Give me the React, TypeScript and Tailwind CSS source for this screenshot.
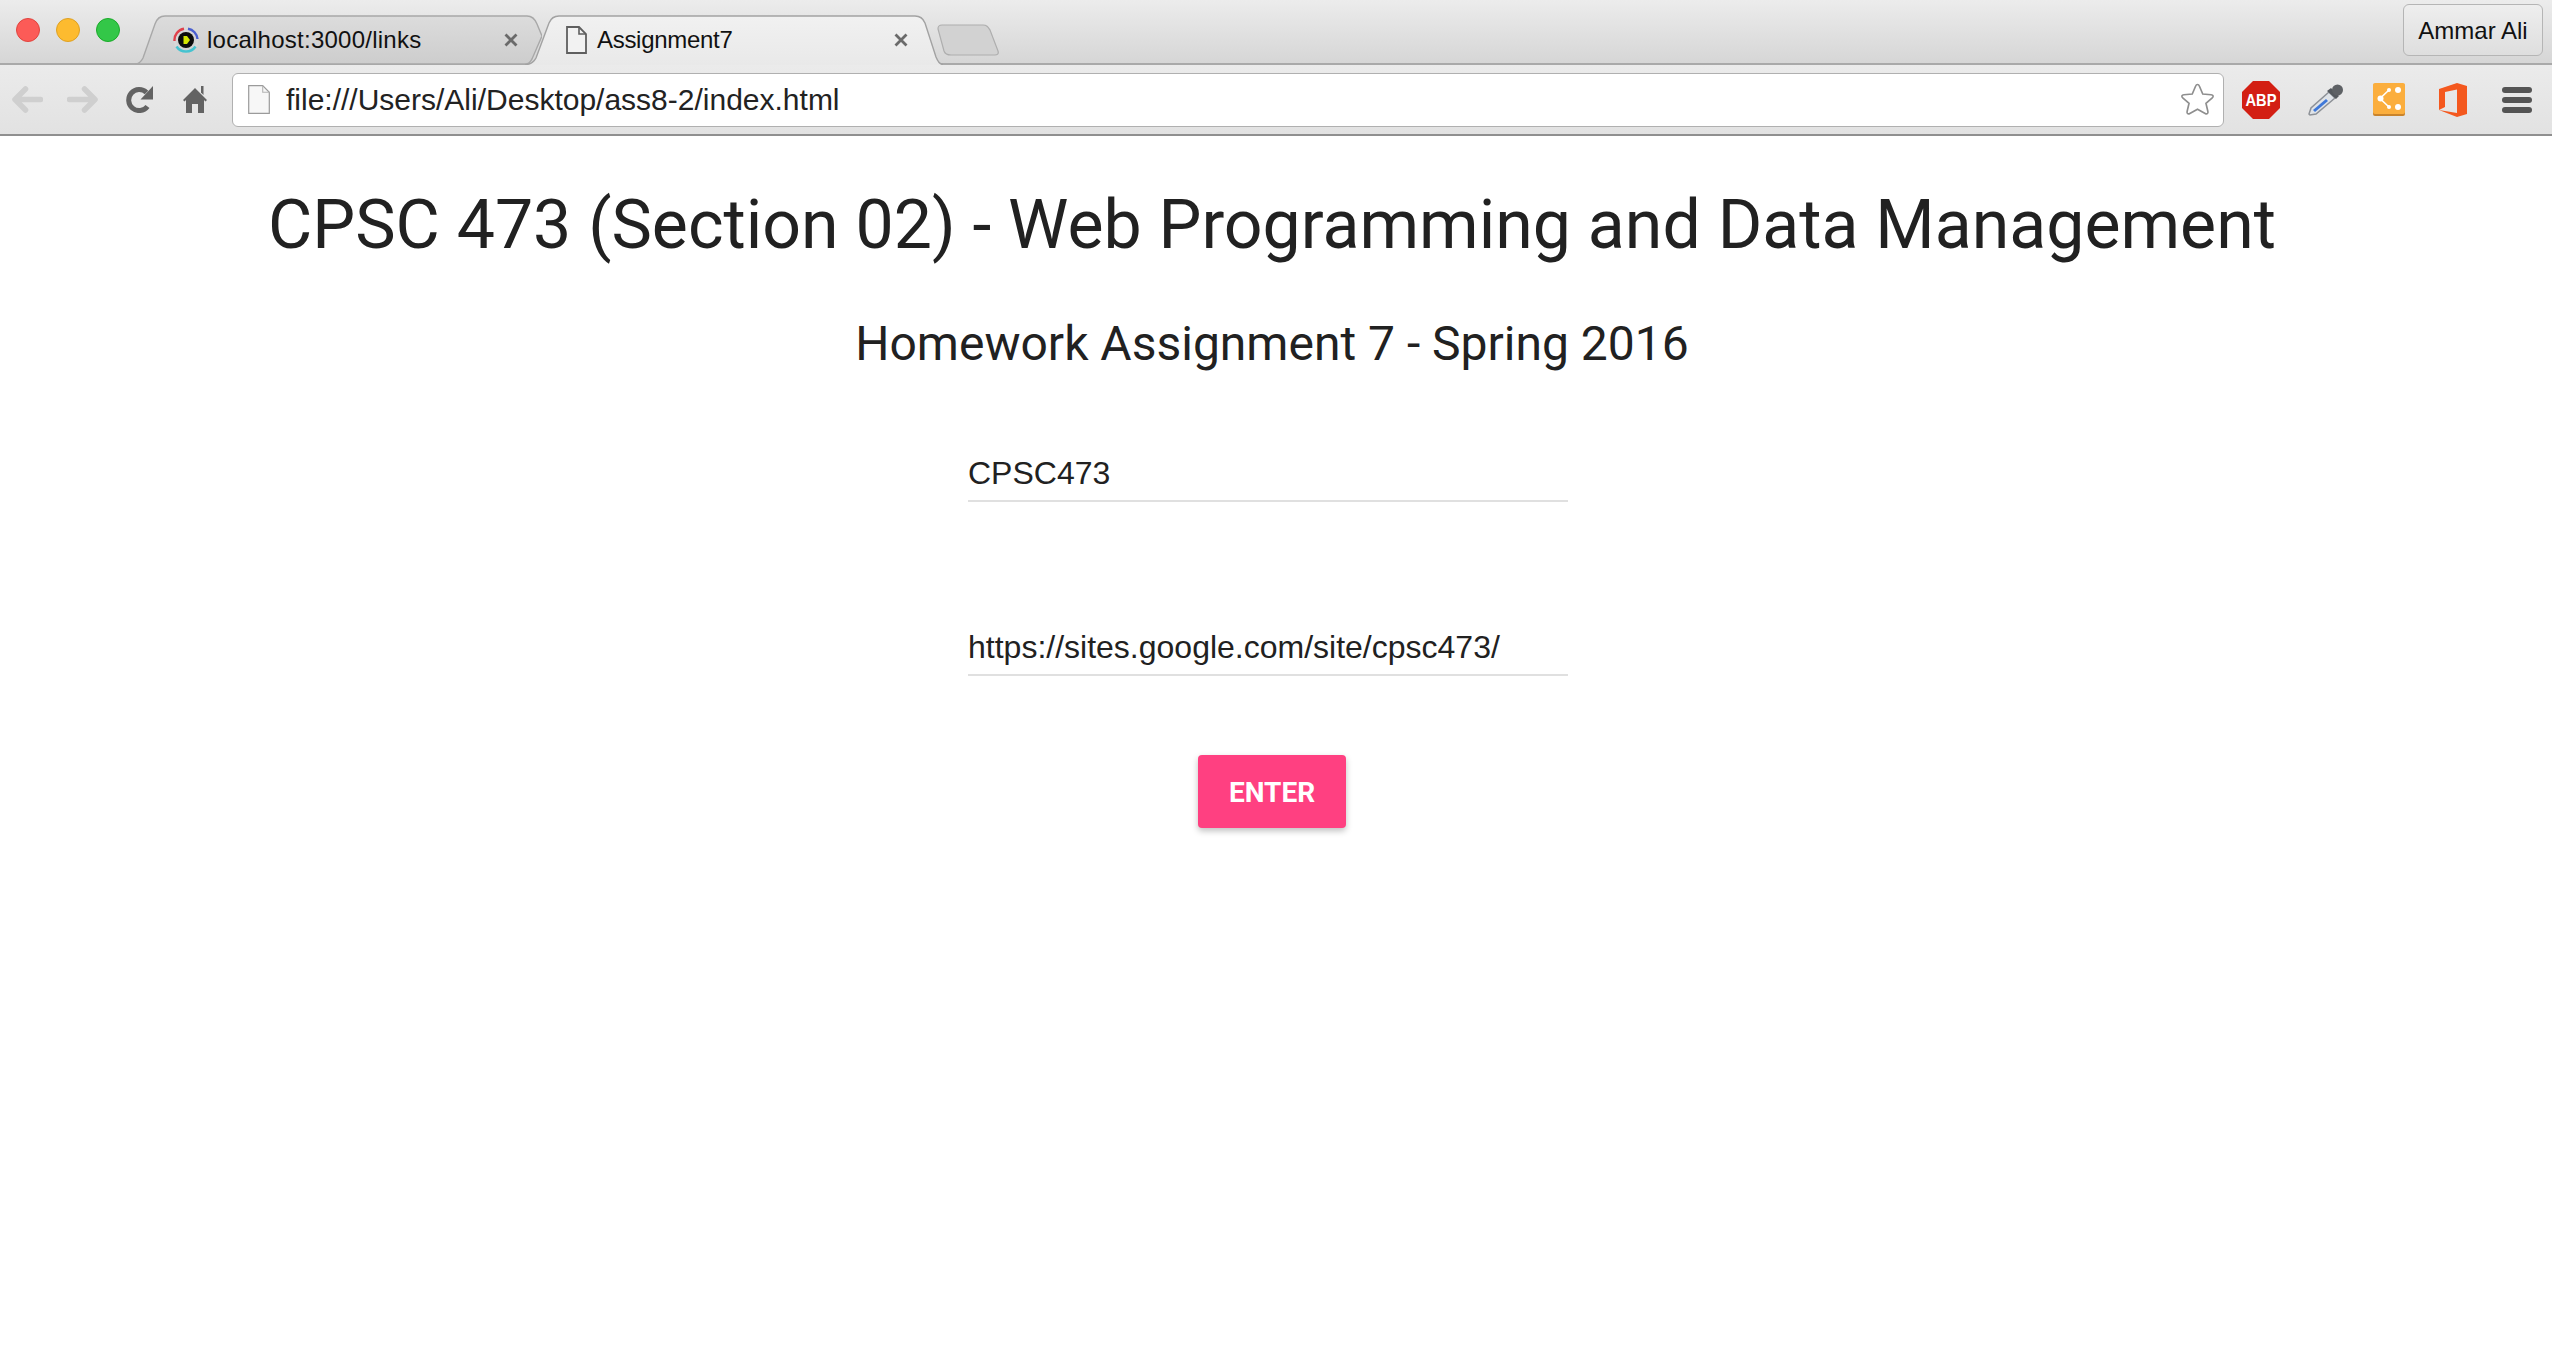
import React from "react";

const helvetica = "font-['Liberation_Sans',Arial,sans-serif]";
const roboto = "font-['Roboto',sans-serif]";

function Favicon() {
  return (
    <svg width="26" height="26" viewBox="0 0 26 26" className="shrink-0">
      <circle cx="13" cy="13" r="11.5" fill="none" stroke="#d8d8d8" strokeWidth="2" />
      <path d="M1.500 14A11.500 11.500 0 0 1 11 1.700" fill="none" stroke="#e0404a" strokeWidth="2.4" />
      <path d="M15 1.700A11.500 11.500 0 0 1 24.500 12" fill="none" stroke="#4a5fd0" strokeWidth="2.4" />
      <path d="M3.500 19.500A11.500 11.500 0 0 0 22.500 19.500" fill="none" stroke="#45c3d0" strokeWidth="2.6" />
      <circle cx="13" cy="13" r="8" fill="#0c0c0c" />
      <path d="M10.500 9h3.500l3 4-3 4h-3.500z" fill="#d4e600" />
    </svg>
  );
}

function DocIcon() {
  return (
    <svg width="21" height="28" viewBox="0 0 21 28" className="shrink-0">
      <path d="M1 1h12l7 7v19H1z" fill="#f2f2f2" stroke="#5f5f5f" strokeWidth="1.800" />
      <path d="M13 1v7h7" fill="none" stroke="#5f5f5f" strokeWidth="1.600" />
    </svg>
  );
}

function CloseIcon() {
  return (
    <svg width="14" height="14" viewBox="0 0 14 14" className="shrink-0">
      <path d="M1.500 1.500l11 11M12.500 1.500l-11 11" stroke="#6a6a6a" strokeWidth="2.800" />
    </svg>
  );
}

function InactiveTabShape() {
  return (
    <svg width="407" height="50" viewBox="0 0 407 50" className="absolute inset-0">
      <defs>
        <linearGradient id="tabOff" x1="0" y1="0" x2="0" y2="1">
          <stop offset="0" stopColor="#dcdcdc" />
          <stop offset="1" stopColor="#cdcdcd" />
        </linearGradient>
      </defs>
      <path
        d="M0 49C4 49 6 47 8 43L20 9C22 3 25 1 30 1H392C397 1 400 4 402 9L407 21L397 44C395 47 394 49 391 49Z"
        fill="url(#tabOff)"
        stroke="#a8a8a8"
        strokeWidth="1.400"
      />
    </svg>
  );
}

function ActiveTabShape() {
  return (
    <svg width="418" height="50" viewBox="0 0 418 50" className="absolute inset-0">
      <defs>
        <linearGradient id="tabOn" x1="0" y1="0" x2="0" y2="1">
          <stop offset="0" stopColor="#f1f1f1" />
          <stop offset="1" stopColor="#e9e9e9" />
        </linearGradient>
      </defs>
      <path d="M0 50C6 50 9 47 11 43L24 8C26 3 29 1 34 1H390C395 1 398 3 400 8L411 42C413 47 415 50 418 50Z" fill="url(#tabOn)" />
      <path d="M0 49.500C6 49.500 9 47 11 43L24 8C26 3 29 1 34 1H390C395 1 398 3 400 8L411 42C413 47 415 49.500 418 49.500" fill="none" stroke="#a2a2a2" strokeWidth="1.400" />
    </svg>
  );
}

function NewTabShape() {
  return (
    <svg width="62" height="32" viewBox="0 0 62 32" className="ml-[-6px] mt-[9px] shrink-0">
      <path d="M1 5C1 2 2 1 5 1H46C50 1 51 3 53 6L61 27C62 30 60 31 58 31H14C10 31 8 30 7 27Z" fill="#d2d2d2" stroke="#aeaeae" strokeWidth="1.200" />
    </svg>
  );
}

function BackIcon({ flip }: { flip?: boolean }) {
  return (
    <svg width="31" height="27" viewBox="0 0 31 27" className={flip ? "-scale-x-100" : ""}>
      <path d="M13.500 3L3 13.500l10.500 10.500M4 13.500h24.500" fill="none" stroke="#cfcfcf" strokeWidth="5.500" strokeLinecap="round" strokeLinejoin="round" />
    </svg>
  );
}

function ReloadIcon() {
  return (
    <svg width="27" height="27" viewBox="0 0 27 27">
      <path d="M21.500 20.500A10.500 10.500 0 1 1 20.500 6.500" fill="none" stroke="#636363" strokeWidth="5" />
      <path d="M27 0v13.500H14.500z" fill="#636363" />
    </svg>
  );
}

function HomeIcon() {
  return (
    <svg width="24" height="27" viewBox="0 0 24 27">
      <path d="M0 14L12 2l12 12-1.500 1.500L21 14v13h-6v-9H9v9H3V14l-1.500 1.500z" fill="#636363" />
      <path d="M18 0h2.500v9L18 6.500z" fill="#636363" />
    </svg>
  );
}

function PageIcon() {
  return (
    <svg width="22" height="29" viewBox="0 0 22 29" className="shrink-0">
      <path d="M.7.7h14l6.600 6.600v21H.7z" fill="#f7f7f7" stroke="#9b9b9b" strokeWidth="1.200" />
      <path d="M14.700.7v6.600h6.600" fill="none" stroke="#b5b5b5" strokeWidth="1.100" />
    </svg>
  );
}

function StarIcon() {
  return (
    <svg width="35" height="34" viewBox="0 0 36 35">
      <path
        d="M18 1.500c1 0 1.600.8 2 1.800l3.400 8 8.600.8c2.200.2 2.800 1.800 1.200 3.200l-6.500 5.600 2 8.500c.5 2.100-1 3-2.800 2L18 27l-7.900 4.400c-1.800 1-3.300.1-2.800-2l2-8.500-6.500-5.600c-1.600-1.400-1-3 1.200-3.200l8.600-.8 3.400-8c.4-1 1-1.800 2-1.800z"
        fill="#fff"
        stroke="#8e8e8e"
        strokeWidth="1.700"
      />
    </svg>
  );
}

function AbpIcon() {
  return (
    <svg width="38" height="38" viewBox="0 0 38 38">
      <path d="M11 0h16l11 11v16L27 38H11L0 27V11z" fill="#d31f13" />
      <text x="19" y="25" textAnchor="middle" textLength="31" lengthAdjust="spacingAndGlyphs" fontFamily="Liberation Sans, Arial, sans-serif" fontWeight="700" fontSize="17" fill="#fff">
        ABP
      </text>
    </svg>
  );
}

function DropperIcon() {
  return (
    <svg width="36" height="32" viewBox="0 0 36 32">
      <path d="M21 8l6 6L8 30l-6 1-1-1 2-6z" fill="#dfe3e8" stroke="#8d9197" strokeWidth="1.500" />
      <path d="M5 26l13-11 2 2L7 28z" fill="#3f78d8" />
      <path d="M19 7l9 8 3-3-8-8z" fill="#55595e" />
      <circle cx="29.500" cy="6" r="5.500" fill="#5e6165" />
    </svg>
  );
}

function ShareIcon() {
  return (
    <svg width="32" height="33" viewBox="0 0 32 33">
      <rect x="0" y="1" width="32" height="32" rx="2" fill="#c9842c" />
      <rect x="0" y="0" width="32" height="31" rx="2" fill="#fbae3d" />
      <path d="M16 7L7 15.500l9 8.500" fill="none" stroke="#fff" strokeWidth="1.600" />
      <circle cx="7.500" cy="15.500" r="3" fill="#fff" />
      <circle cx="16" cy="7" r="2" fill="#fff" />
      <circle cx="25" cy="7" r="3" fill="#fff" />
      <circle cx="16" cy="24" r="2" fill="#fff" />
      <circle cx="25" cy="24" r="3" fill="#fff" />
    </svg>
  );
}

function OfficeIcon() {
  return (
    <svg width="28" height="34" viewBox="0 0 28 34">
      <path d="M0 6L18 0l10 3v28l-10 3L0 27l18 3V6.500L6 9v15l-6 3z" fill="#f4581e" />
    </svg>
  );
}

function MenuIcon() {
  return (
    <div className="flex w-[30px] flex-col gap-[4px]">
      <div className="h-[6px] rounded-full bg-[#545454]" />
      <div className="h-[6px] rounded-full bg-[#545454]" />
      <div className="h-[6px] rounded-full bg-[#545454]" />
    </div>
  );
}

function Field({ value }: { value: string }) {
  return (
    <input
      readOnly
      value={value}
      className={`${helvetica} block h-[52px] w-[600px] border-b-2 border-[#e0e0e0] bg-transparent pb-[3px] text-[32px] text-[#212121] outline-none`}
    />
  );
}

export default function App() {
  return (
    <div className="flex h-[1346px] w-[2552px] flex-col overflow-hidden bg-white">
      <div className="flex h-[65px] shrink-0 items-start border-b-2 border-[#a9a9a9] bg-gradient-to-b from-[#ececec] to-[#d6d6d6]">
        <div className="flex h-full items-center gap-4 pl-4 pb-[3px]">
          <div className="h-6 w-6 rounded-full border border-[#e0443e] bg-[#fc5b57]" />
          <div className="h-6 w-6 rounded-full border border-[#dea123] bg-[#fdbb2f]" />
          <div className="h-6 w-6 rounded-full border border-[#1aab29] bg-[#33c748]" />
        </div>
        <div className="flex pt-[15px]">
          <div className="relative ml-[15px] h-[50px] w-[407px] shrink-0">
            <InactiveTabShape />
            <div className="relative flex h-full items-center pl-[38px]">
              <Favicon />
              <span className={`${helvetica} ml-[8px] whitespace-nowrap text-[24px] leading-none tracking-[0.25px] text-[#111]`}>localhost:3000/links</span>
            </div>
            <div className="absolute right-[24px] top-[18px]">
              <CloseIcon />
            </div>
          </div>
          <div className="relative z-10 ml-[-17px] h-[50px] w-[418px] shrink-0">
            <ActiveTabShape />
            <div className="relative flex h-full items-center pl-[41px]">
              <DocIcon />
              <span className={`${helvetica} ml-[10px] whitespace-nowrap text-[24px] leading-none tracking-[-0.3px] text-[#111]`}>Assignment7</span>
            </div>
            <div className="absolute right-[35px] top-[18px]">
              <CloseIcon />
            </div>
          </div>
          <NewTabShape />
        </div>
        <div className={`${helvetica} ml-auto mr-[9px] mt-[4px] flex h-[52px] w-[140px] items-center justify-center rounded-[6px] border border-[#b5b5b5] bg-gradient-to-b from-[#eeeeee] to-[#dedede] pt-[2px] text-[24px] text-[#111]`}>
          Ammar Ali
        </div>
      </div>

      <div className="flex h-[71px] shrink-0 items-center border-b-2 border-[#8f8f8f] bg-gradient-to-b from-[#ebebeb] to-[#e2e2e2]">
        <div className="flex w-[232px] shrink-0 items-center pl-[12px]">
          <BackIcon />
          <div className="ml-[24px]">
            <BackIcon flip />
          </div>
          <div className="ml-[28px]">
            <ReloadIcon />
          </div>
          <div className="ml-[30px]">
            <HomeIcon />
          </div>
        </div>
        <div className="flex h-[54px] w-[1992px] shrink-0 items-center rounded-[6px] border border-[#b0b0b0] bg-white pl-[15px] pr-[8px]">
          <PageIcon />
          <span className={`${helvetica} ml-[16px] text-[30px] leading-none text-[#222]`}>file:///Users/Ali/Desktop/ass8-2/index.html</span>
          <div className="ml-auto flex">
            <StarIcon />
          </div>
        </div>
        <div className="flex flex-1 items-center pl-[18px]">
          <AbpIcon />
          <div className="ml-[28px]">
            <DropperIcon />
          </div>
          <div className="ml-[29px]">
            <ShareIcon />
          </div>
          <div className="ml-[34px]">
            <OfficeIcon />
          </div>
          <div className="ml-[35px]">
            <MenuIcon />
          </div>
        </div>
      </div>

      <main className={`${roboto} flex flex-col items-center pr-2 text-[#212121]`}>
        <h1 className="mt-[45px] text-[68px] leading-[88px]">CPSC 473 (Section 02) - Web Programming and Data Management</h1>
        <h2 className="mt-[45px] text-[48px] leading-[60px]">Homework Assignment 7 - Spring 2016</h2>
        <div className="mt-[76px] mr-[8px] flex flex-col gap-[122px]">
          <Field value="CPSC473" />
          <Field value="https://sites.google.com/site/cpsc473/" />
        </div>
        <button className="mt-[79px] flex h-[73px] w-[148px] items-center justify-center rounded-[4px] bg-[#ff4081] pt-[2px] text-[28px] font-bold text-white shadow-[0_3px_6px_rgba(0,0,0,0.25)]">
          ENTER
        </button>
      </main>
    </div>
  );
}
